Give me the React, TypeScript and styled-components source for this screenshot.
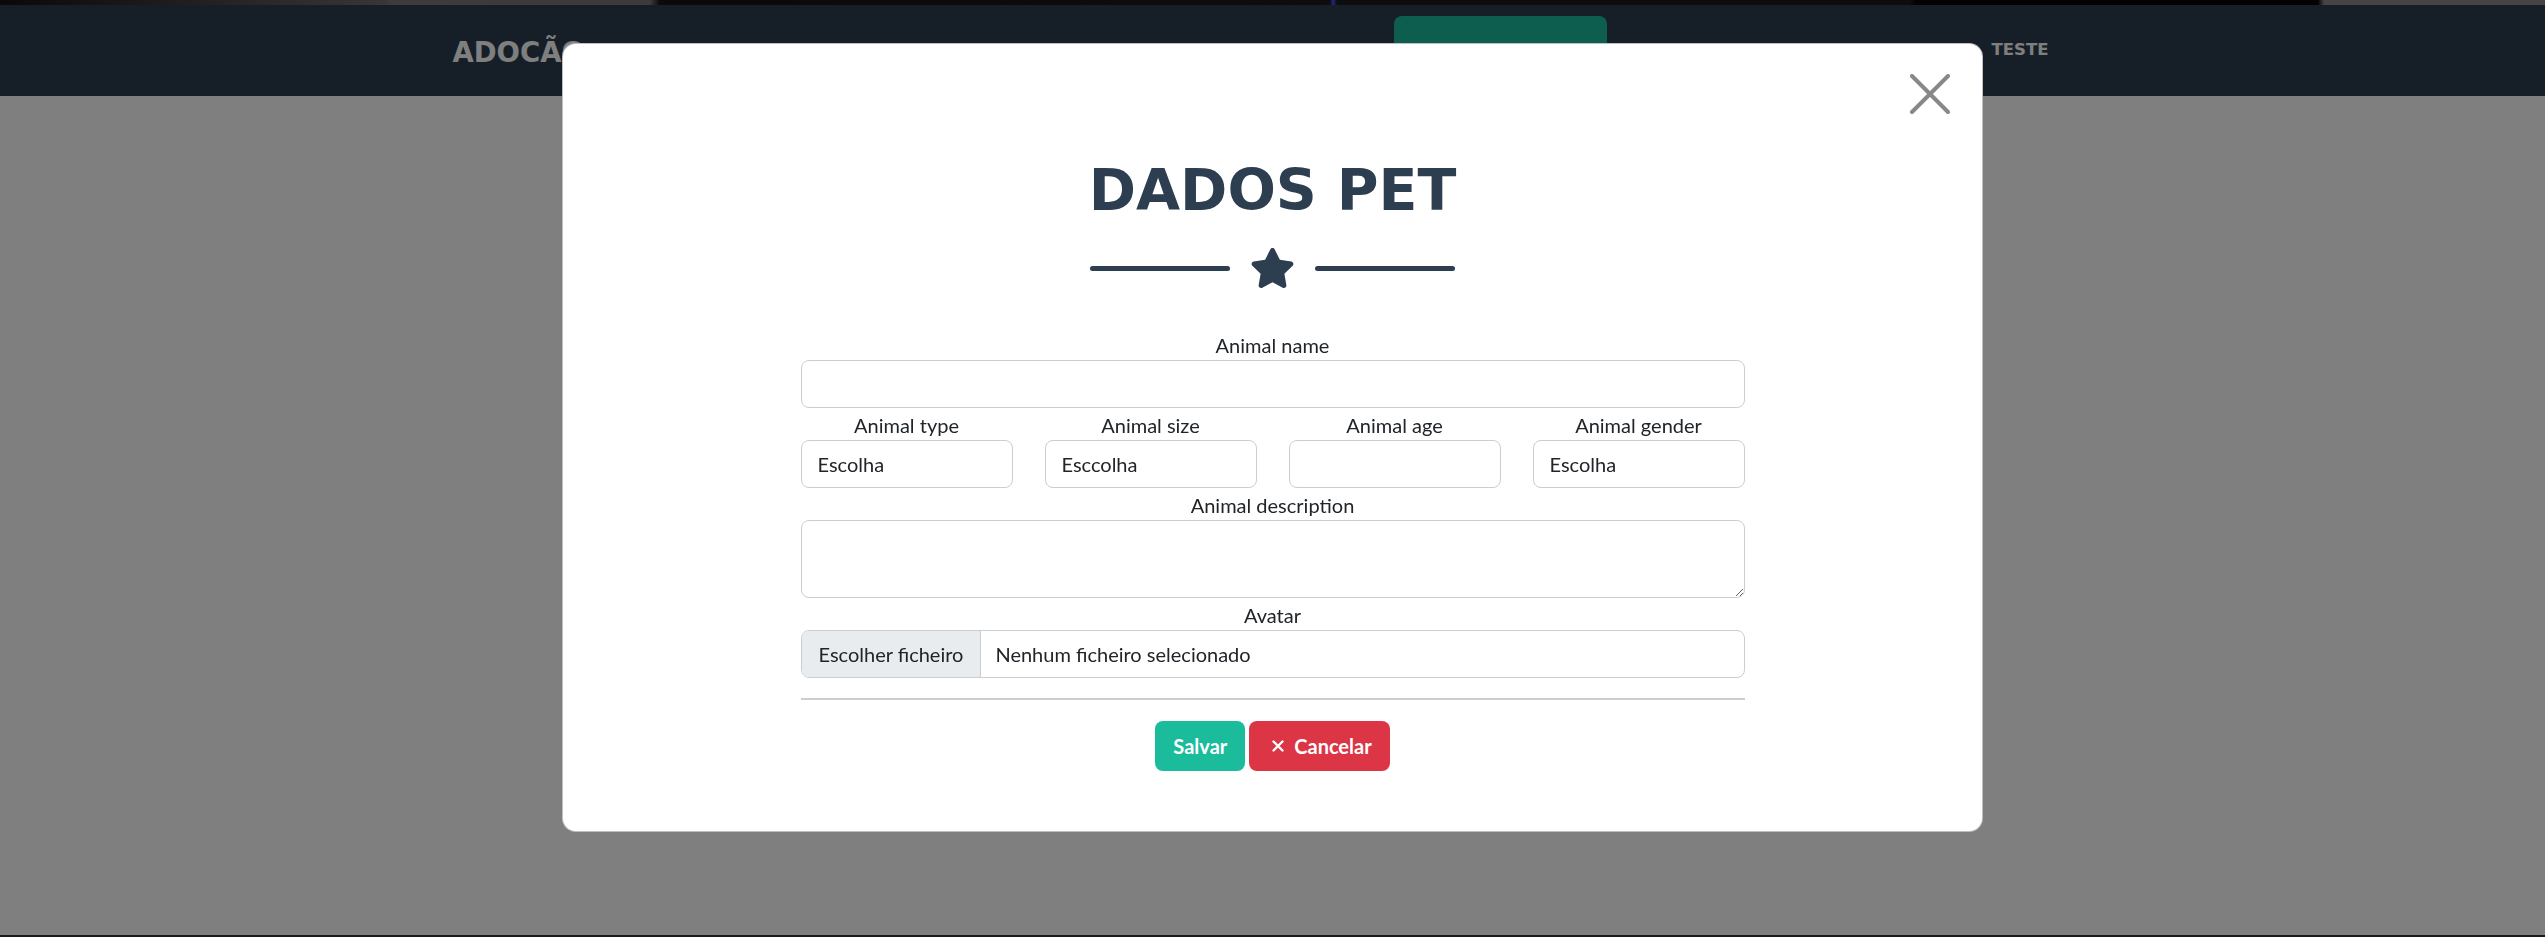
import React from "react";
import styled, { createGlobalStyle, css } from "styled-components";

const GlobalStyle = createGlobalStyle`
  html, body { margin: 0; padding: 0; }
  body {
    font-family: Lato, "Noto Sans", sans-serif;
    background: #ffffff;
    color: #212529;
  }
  *, *::before, *::after { box-sizing: border-box; }
`;

const Page = styled.div`
  display: flex;
  flex-direction: column;
  min-height: 937px;
`;

const TopStrip = styled.div`
  height: 5px;
  background: linear-gradient(
    90deg,
    #121212 0px,
    #6e6e6e 385px,
    #787878 390px,
    #767676 650px,
    #161416 660px,
    #1a181c 1330px,
    #4a4cff 1333px,
    #1a181c 1337px,
    #1c1a1c 1910px,
    #060606 1916px,
    #060606 2318px,
    #8a8a8a 2324px,
    #8a8a8a 2545px
  );
`;

const Navbar = styled.nav`
  height: 91px;
  background: #2c3e50;
`;

const NavInner = styled.div`
  width: 1640px;
  height: 100%;
  margin: 0 auto;
  display: flex;
  align-items: center;
`;

const Brand = styled.a`
  font-family: "DejaVu Sans", sans-serif;
  font-weight: 700;
  font-size: 27.5px;
  color: #ffffff;
  text-transform: uppercase;
  text-decoration: none;
  padding-top: 2px;
`;

const NavLinks = styled.ul`
  list-style: none;
  margin: 0 0 0 auto;
  padding: 0;
  display: flex;
  align-items: center;
`;

const HighlightItem = styled.li`
  width: 213px;
  height: 69px;
  margin-right: 385px;
  border-radius: 8px;
  background: #1abc9c;
`;

const NavLink = styled.li`
  font-family: "DejaVu Sans", sans-serif;
  font-weight: 700;
  font-size: 16.5px;
  color: #ffffff;
  text-transform: uppercase;
  padding-right: 44px;
  margin-bottom: 3px;
`;

const Main = styled.main`
  flex: 1;
  min-height: 839px;
  background: #ffffff;
`;

const Footer = styled.footer`
  height: 2px;
  background: #3a332e;
`;

const Backdrop = styled.div`
  position: fixed;
  inset: 0;
  background: rgba(0, 0, 0, 0.5);
  display: flex;
  justify-content: center;
  align-items: flex-start;
  padding-top: 43px;
`;

const Modal = styled.div`
  position: relative;
  width: 1421px;
  background: #ffffff;
  border: 1px solid rgba(0, 0, 0, 0.25);
  border-radius: 14px;
  padding: 112px 0 60px;
  display: flex;
  flex-direction: column;
  align-items: center;
`;

const CloseButton = styled.button`
  position: absolute;
  top: 30px;
  right: 32px;
  width: 40px;
  height: 40px;
  padding: 0;
  border: none;
  background: transparent;
  display: flex;
  align-items: center;
  justify-content: center;
  cursor: pointer;
`;

const Title = styled.h2`
  margin: 0;
  font-family: "DejaVu Sans", sans-serif;
  font-weight: 700;
  font-size: 57px;
  line-height: 68px;
  color: #2c3e50;
  text-transform: uppercase;
`;

const Divider = styled.div`
  margin-top: 24px;
  height: 40px;
  display: flex;
  align-items: center;
  gap: 20px;
`;

const DividerLine = styled.span`
  display: block;
  width: 140px;
  height: 5px;
  border-radius: 3px;
  background: #2c3e50;
`;

const Form = styled.form`
  width: 944px;
  margin-top: 40px;
  display: flex;
  flex-direction: column;
`;

const Field = styled.div`
  display: flex;
  flex-direction: column;
  padding-top: 4px;
  min-width: 0;
`;

const Row = styled.div`
  display: grid;
  grid-template-columns: repeat(4, 1fr);
  column-gap: 32px;
`;

const Label = styled.label`
  display: block;
  text-align: center;
  font-size: 20px;
  line-height: 27px;
  margin-bottom: 1px;
  color: #212529;
`;

const controlBase = css`
  width: 100%;
  border: 1px solid #c9ced4;
  border-radius: 8px;
  background: #ffffff;
  font-family: Lato, "Noto Sans", sans-serif;
  font-size: 20px;
  color: #212529;
  outline: none;
`;

const TextInput = styled.input`
  ${controlBase};
  height: 48px;
  padding: 0 16px;
`;

const TextArea = styled.textarea`
  ${controlBase};
  height: 78px;
  padding: 10px 16px;
  resize: vertical;
  display: block;
`;

const FileBox = styled.div`
  ${controlBase};
  height: 48px;
  display: flex;
  align-items: stretch;
  overflow: hidden;
`;

const FileButton = styled.span`
  display: flex;
  align-items: center;
  padding: 0 17px;
  background: #e9ecef;
  border-right: 1px solid #c9ced4;
  white-space: nowrap;
`;

const FileName = styled.span`
  display: flex;
  align-items: center;
  padding-left: 14px;
  white-space: nowrap;
`;

const Rule = styled.hr`
  width: 100%;
  margin: 20px 0 21px;
  border: none;
  border-top: 2px solid #cbcdd0;
`;

const Actions = styled.div`
  display: flex;
  justify-content: center;
  gap: 4px;
`;

const Button = styled.button<{ $variant: "success" | "danger" }>`
  height: 50px;
  padding: 0 18px;
  border: none;
  border-radius: 8px;
  display: inline-flex;
  align-items: center;
  gap: 10px;
  font-family: Lato, "Noto Sans", sans-serif;
  font-size: 20px;
  font-weight: 700;
  color: #ffffff;
  cursor: pointer;
  background: ${(p) => (p.$variant === "success" ? "#1abc9c" : "#dc3545")};
`;

const fields = ["Animal type", "Animal size", "Animal age", "Animal gender"];
const values = ["Escolha", "Esccolha", "", "Escolha"];

const Star = () => (
  <svg width="45" height="40" viewBox="0 0 576 512" aria-hidden="true">
    <path
      fill="#2c3e50"
      d="M259.3 17.8L194 150.2 47.9 171.5c-26.2 3.8-36.7 36.1-17.7 54.6l105.7 103-25 145.5c-4.5 26.3 23.2 46 46.4 33.7L288 439.6l130.7 68.7c23.2 12.2 50.9-7.4 46.4-33.7l-25-145.5 105.7-103c19-18.5 8.5-50.8-17.7-54.6L382 150.2 316.7 17.8c-11.7-23.6-45.6-23.9-57.4 0z"
    />
  </svg>
);

const CloseIcon = () => (
  <svg width="40" height="40" viewBox="0 0 40 40" aria-hidden="true">
    <path d="M2 2 L38 38 M38 2 L2 38" stroke="#888888" strokeWidth="4" strokeLinecap="round" />
  </svg>
);

const SmallX = () => (
  <svg width="12" height="12" viewBox="0 0 12 12" aria-hidden="true" style={{ marginLeft: 5 }}>
    <path d="M1.5 1.5 L10.5 10.5 M10.5 1.5 L1.5 10.5" stroke="#ffffff" strokeWidth="2.4" strokeLinecap="round" />
  </svg>
);

export default function App() {
  return (
    <>
      <GlobalStyle />
      <Page>
        <TopStrip />
        <Navbar>
          <NavInner>
            <Brand href="#">ADOCÃO</Brand>
            <NavLinks>
              <HighlightItem />
              <NavLink>TESTE</NavLink>
            </NavLinks>
          </NavInner>
        </Navbar>
        <Main />
        <Footer />
      </Page>
      <Backdrop>
        <Modal>
          <CloseButton type="button" aria-label="Fechar">
            <CloseIcon />
          </CloseButton>
          <Title>DADOS PET</Title>
          <Divider>
            <DividerLine />
            <Star />
            <DividerLine />
          </Divider>
          <Form onSubmit={(e) => e.preventDefault()}>
            <Field>
              <Label>Animal name</Label>
              <TextInput type="text" />
            </Field>
            <Row>
              {fields.map((f, i) => (
                <Field key={f}>
                  <Label>{f}</Label>
                  <TextInput type="text" defaultValue={values[i]} />
                </Field>
              ))}
            </Row>
            <Field>
              <Label>Animal description</Label>
              <TextArea />
            </Field>
            <Field>
              <Label>Avatar</Label>
              <FileBox>
                <FileButton>Escolher ficheiro</FileButton>
                <FileName>Nenhum ficheiro selecionado</FileName>
              </FileBox>
            </Field>
            <Rule />
            <Actions>
              <Button type="submit" $variant="success">Salvar</Button>
              <Button type="button" $variant="danger">
                <SmallX />
                Cancelar
              </Button>
            </Actions>
          </Form>
        </Modal>
      </Backdrop>
    </>
  );
}
